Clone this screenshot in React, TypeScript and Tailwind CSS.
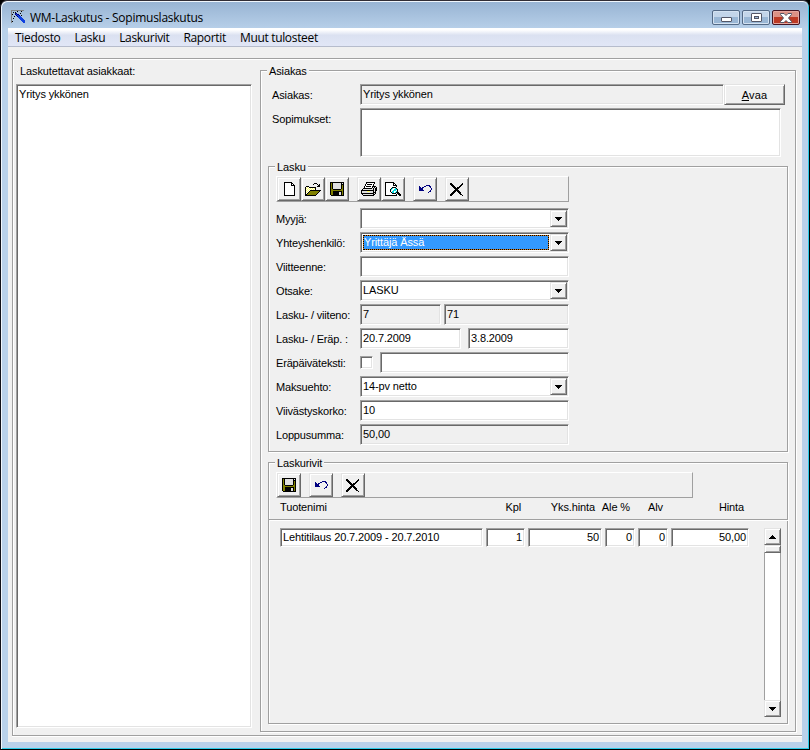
import { ReactNode } from 'react';

// Colors used by the pixel icons, one letter per color
const palette: Record<string, string> = {
  '#': '#000000',
  w: '#ffffff',
  y: '#ffff66',
  o: '#808000',
  g: '#e0e0e0',
  d: '#808080',
  b: '#000080',
  u: '#1040e0',
  c: '#00e0e0',
};

const newIcon = [
  '########...',
  '#wwwwww##..',
  '#wwwwww#w#.',
  '#wwwwww####',
  '#wwwwwwwww#',
  '#wwwwwwwww#',
  '#wwwwwwwww#',
  '#wwwwwwwww#',
  '#wwwwwwwww#',
  '#wwwwwwwww#',
  '#wwwwwwwww#',
  '#wwwwwwwww#',
  '#wwwwwwwww#',
  '###########',
];

const openIcon = [
  '.........###....',
  '........#...#.#.',
  '.............##.',
  '.###........###.',
  '#wyw#######.....',
  '#ywywywywy#.....',
  '#wywywywyw#.....',
  '#ywyw###########',
  '#wyw#ooooooooo#.',
  '#yw#ooooooooo#..',
  '#w#ooooooooo#...',
  '##ooooooooo#....',
  '###########.....',
];

const saveIcon = [
  '##############',
  '#o#gggggggg#g#',
  '#o#gggggggg###',
  '#o#gggggggg#o#',
  '#o#gggggggg#o#',
  '#o#gggggggg#o#',
  '#o#gggggggg#o#',
  '#oo########oo#',
  '#oooooooooooo#',
  '#oo#########o#',
  '#oo######gg#o#',
  '#oo######gg#o#',
  '#oo######gg#o#',
  '.#############',
];

const printIcon = [
  '.....#########..',
  '.....#wwwwwww#..',
  '....#w#####w#...',
  '....#wwwwwww#...',
  '...#w#####w####.',
  '...#wwwwwww#g#g#',
  '..#########g#g##',
  '.#gggggggggg#g##',
  '#############g##',
  '#gggggyyyggg#g#.',
  '#ggggggggggg###.',
  '#############g#.',
  '.#gggggggggg##..',
  '..###########...',
];

const previewIcon = [
  '#########.......',
  '#wwwwwww##......',
  '#wwwwwww#w#.....',
  '#wwwwwww####....',
  '#wwwwwwwwww#....',
  '#wwwwww####.....',
  '#wwwww#cwwc#....',
  '#wwww#cwwccc#...',
  '#wwww#wwcccw#...',
  '#wwww#wccwwc#...',
  '#wwwww#ccwc###..',
  '#wwwwww####.###.',
  '#wwwwwwwwww#.###',
  '############..##',
];

const undoIcon = [
  '.......bbbb..',
  'b....bb...bb.',
  'bb.bb......b.',
  'bbbb........b',
  'bbbb........b',
  'bbbbb......b.',
  '..........bb.',
  '.........b...',
];

const deleteIcon = [
  '##..........#.',
  '###........##.',
  '.###......##..',
  '..###....##...',
  '...###.###....',
  '....#####.....',
  '.....###......',
  '....#####.....',
  '...###.###....',
  '..###...###...',
  '.###.....##...',
  '###.......##..',
  '##..........#.',
];

const wandIcon = [
  'ddddddddddddd.',
  'd.....#...#...',
  'd.#.#.........',
  'd...bb...#....',
  'd#..bubb......',
  'd....buub.#...',
  'd..#..buuu....',
  'd......uuuu...',
  'd.#.....uuuu..',
  'd........uuuu.',
  'd.........uuuu',
  'd#.........uuu',
  'd...........uu',
];

const downArrow = ['#######', '.#####.', '..###..', '...#...'];
const upArrow = ['...#...', '..###..', '.#####.', '#######'];

// Border styles
const etched =
  'border border-[#a0a0a0] shadow-[1px_1px_0_#fff,inset_1px_1px_0_#fff]';
const sunken =
  'border border-t-[#a0a0a0] border-l-[#a0a0a0] border-r-white border-b-white shadow-[inset_1px_1px_0_#696969,inset_-1px_-1px_0_#e3e3e3]';
const raised =
  'border border-t-[#e3e3e3] border-l-[#e3e3e3] border-r-[#696969] border-b-[#696969] bg-[#f0f0f0] shadow-[inset_1px_1px_0_#fff,inset_-1px_-1px_0_#a0a0a0]';

function PixelIcon({ rows }: { rows: string[] }) {
  return (
    <svg
      width={rows[0].length}
      height={rows.length}
      shapeRendering="crispEdges"
      className="shrink-0"
    >
      {rows.map((row, y) =>
        row
          .split('')
          .map((ch, x) =>
            ch === '.' ? null : (
              <rect
                key={`${x}-${y}`}
                x={x}
                y={y}
                width={1}
                height={1}
                fill={palette[ch]}
              />
            )
          )
      )}
    </svg>
  );
}

function ToolButton({ icon, gap }: { icon: string[]; gap?: boolean }) {
  return (
    <button
      className={`flex h-6 w-6 shrink-0 items-center justify-center ${raised} ${gap ? 'ml-2' : ''}`}
    >
      <PixelIcon rows={icon} />
    </button>
  );
}

function Toolbar({ width, children }: { width: string; children: ReactNode }) {
  return (
    <div
      className={`flex h-[26px] border border-t-white border-l-white border-r-[#a0a0a0] border-b-[#a0a0a0] ${width}`}
    >
      {children}
    </div>
  );
}

function GroupTitle({ children }: { children: ReactNode }) {
  return (
    <span className="absolute -top-[6px] left-[6px] bg-[#f0f0f0] px-[2px] leading-[13px]">
      {children}
    </span>
  );
}

interface FieldProps {
  value?: string;
  width: string;
  readOnly?: boolean;
  select?: boolean;
  selected?: boolean;
}

function Field({ value, width, readOnly, select, selected }: FieldProps) {
  return (
    <div
      className={`flex h-[21px] shrink-0 p-px ${width} ${sunken} ${readOnly ? 'bg-[#f0f0f0]' : 'bg-white'}`}
    >
      {selected ? (
        <div className="m-px flex grow bg-[#d07818]">
          <div className="grow border border-dotted border-black bg-[#3399ff] bg-clip-padding leading-[13px] text-white">
            {value}
          </div>
        </div>
      ) : (
        <div className="grow pl-px leading-[16px]">{value}</div>
      )}
      {select && (
        <button
          className={`flex w-[17px] shrink-0 items-center justify-center ${raised}`}
        >
          <PixelIcon rows={downArrow} />
        </button>
      )}
    </div>
  );
}

function Row({ label, children }: { label: string; children: ReactNode }) {
  return (
    <div className="flex h-6">
      <div className="w-[84px] shrink-0 pt-[3px] leading-4 tracking-[-0.17px] whitespace-nowrap">
        {label}
      </div>
      {children}
    </div>
  );
}

function Cell({
  value,
  width,
  left,
}: {
  value: string;
  width: string;
  left?: boolean;
}) {
  return (
    <div
      className={`h-[19px] shrink-0 bg-white px-[2px] leading-[17px] whitespace-nowrap ${width} ${sunken} ${left ? 'text-left' : 'text-right'}`}
    >
      {value}
    </div>
  );
}

function TitleBar() {
  return (
    <div className="flex h-7 shrink-0 items-start bg-linear-to-b from-[#98b4d3] to-[#b9d1ea] pl-[9px]">
      <div className="mt-2">
        <PixelIcon rows={wandIcon} />
      </div>
      <span className="mt-2 ml-[5px] grow font-['Open_Sans','Noto_Sans',sans-serif] text-[12px] leading-4 tracking-[-0.25px]">
        WM-Laskutus - Sopimuslaskutus
      </span>
      <div className="mt-2 mr-2 flex gap-[2px]">
        <button className="flex h-[15px] w-7 items-end justify-center rounded-[2px] border border-[#536985] bg-linear-to-b from-[#c3d5e9] from-50% to-[#9ab7d5] to-50% pb-[2px] shadow-[inset_0_0_0_1px_#d4e2f1]">
          <span className="h-[5px] w-[11px] rounded-[1px] border border-[#535666] bg-white" />
        </button>
        <button className="flex h-[15px] w-7 items-center justify-center rounded-[2px] border border-[#536985] bg-linear-to-b from-[#c3d5e9] from-50% to-[#9ab7d5] to-50% shadow-[inset_0_0_0_1px_#d4e2f1]">
          <span className="flex h-[9px] w-[11px] items-center justify-center rounded-[1px] border border-[#535666] bg-white">
            <span className="h-[3px] w-[5px] border border-[#535666] bg-[#9ab7d5]" />
          </span>
        </button>
        <button className="flex h-[15px] w-7 items-center justify-center rounded-[2px] border border-[#431422] bg-linear-to-b from-[#dd9185] from-50% to-[#bd3a25] to-50% shadow-[inset_0_0_0_1px_#e5a79f]">
          <svg width="12" height="10" viewBox="0 0 12 10">
            <path
              d="M.5.5h3.500l2 2 2-2h3.500v1L8.500 5l3 3.500v1H8l-2-2-2 2H.5v-1l3-3.500-3-3.500z"
              fill="#fff"
              stroke="#535666"
            />
          </svg>
        </button>
      </div>
    </div>
  );
}

function MenuBar() {
  const items = ['Tiedosto', 'Lasku', 'Laskurivit', 'Raportit', 'Muut tulosteet'];

  return (
    <div className="flex h-[19px] shrink-0 gap-[14px] border-b border-[#b6bccc] bg-linear-to-b from-white from-10% via-[#dbe1f1] via-40% to-[#e1e6f6] pl-[7px] font-['Open_Sans','Noto_Sans',sans-serif] text-[12px] leading-[20px] tracking-[-0.33px]">
      {items.map((item) => (
        <span key={item}>{item}</span>
      ))}
    </div>
  );
}

function CustomerList() {
  return (
    <div className="w-[239px] shrink-0 pl-[3px]">
      <div className="h-[25px] pt-[4px] pl-1 leading-4">
        Laskutettavat asiakkaat:
      </div>
      <div className={`h-[644px] bg-white pt-px pl-[2px] leading-4 ${sunken}`}>
        Yritys ykkönen
      </div>
    </div>
  );
}

function InvoiceGroup() {
  return (
    <div className={`relative ml-[7px] h-[286px] w-[520px] pt-[9px] pl-[7px] ${etched}`}>
      <GroupTitle>Lasku</GroupTitle>
      <Toolbar width="w-[293px]">
        <ToolButton icon={newIcon} />
        <ToolButton icon={openIcon} />
        <ToolButton icon={saveIcon} />
        <ToolButton icon={printIcon} gap />
        <ToolButton icon={previewIcon} />
        <ToolButton icon={undoIcon} gap />
        <ToolButton icon={deleteIcon} gap />
      </Toolbar>
      <div className="mt-[6px]">
        <Row label="Myyjä:">
          <Field width="w-[209px]" select />
        </Row>
        <Row label="Yhteyshenkilö:">
          <Field width="w-[209px]" value="Yrittäjä Ässä" select selected />
        </Row>
        <Row label="Viitteenne:">
          <Field width="w-[209px]" />
        </Row>
        <Row label="Otsake:">
          <Field width="w-[209px]" value="LASKU" select />
        </Row>
        <Row label="Lasku- / viiteno:">
          <Field width="w-[81px]" value="7" readOnly />
          <div className="w-[3px]" />
          <Field width="w-[125px]" value="71" readOnly />
        </Row>
        <Row label="Lasku- / Eräp. :">
          <Field width="w-[101px]" value="20.7.2009" />
          <div className="w-[7px]" />
          <Field width="w-[101px]" value="3.8.2009" />
        </Row>
        <Row label="Eräpäiväteksti:">
          <div className={`mt-1 mr-[7px] h-[13px] w-[13px] bg-white ${sunken}`} />
          <Field width="w-[189px]" />
        </Row>
        <Row label="Maksuehto:">
          <Field width="w-[209px]" value="14-pv netto" select />
        </Row>
        <Row label="Viivästyskorko:">
          <Field width="w-[209px]" value="10" />
        </Row>
        <Row label="Loppusumma:">
          <Field width="w-[209px]" value="50,00" readOnly />
        </Row>
      </div>
    </div>
  );
}

function InvoiceRows() {
  return (
    <div className="mt-[10px] ml-[7px] w-[520px]">
      <div className={`relative h-[58px] pt-[9px] pl-[7px] ${etched}`}>
        <GroupTitle>Laskurivit</GroupTitle>
        <Toolbar width="w-[417px]">
          <ToolButton icon={saveIcon} />
          <ToolButton icon={undoIcon} gap />
          <ToolButton icon={deleteIcon} gap />
        </Toolbar>
        <div className="flex pt-px pl-1 leading-4 whitespace-nowrap">
          <span className="w-[202px]">Tuotenimi</span>
          <span className="w-[39px] text-right">Kpl</span>
          <span className="w-[74px] text-right">Yks.hinta</span>
          <span className="w-[35px] text-right">Ale %</span>
          <span className="w-[33px] text-right">Alv</span>
          <span className="w-[81px] text-right">Hinta</span>
        </div>
      </div>
      <div className="flex h-[204px] border border-t-0 border-[#a0a0a0] pt-2 pl-[11px] shadow-[1px_1px_0_#fff,inset_1px_1px_0_#fff]">
        <div className="flex grow gap-[3px]">
          <Cell width="w-[203px]" value="Lehtitilaus 20.7.2009 - 20.7.2010" left />
          <Cell width="w-[39px]" value="1" />
          <Cell width="w-[74px]" value="50" />
          <Cell width="w-[30px]" value="0" />
          <Cell width="w-[30px]" value="0" />
          <Cell width="w-[78px]" value="50,00" />
        </div>
        <div className="mr-[6px] flex h-[189px] w-[17px] shrink-0 flex-col border-x border-[#a0a0a0] bg-white">
          <button
            className={`-mx-px flex h-[17px] shrink-0 items-center justify-center ${raised}`}
          >
            <PixelIcon rows={upArrow} />
          </button>
          <div className={`-mx-px h-2 shrink-0 ${raised}`} />
          <div className="grow" />
          <button
            className={`-mx-px flex h-[17px] shrink-0 items-center justify-center ${raised}`}
          >
            <PixelIcon rows={downArrow} />
          </button>
        </div>
      </div>
    </div>
  );
}

function CustomerGroup() {
  return (
    <div className={`relative mt-[11px] ml-2 h-[662px] w-[536px] shrink-0 ${etched}`}>
      <GroupTitle>Asiakas</GroupTitle>
      <div className="mt-[13px] flex h-6 pl-[11px]">
        <div className="w-[88px] shrink-0 pt-[3px] leading-4">Asiakas:</div>
        <Field width="w-[364px]" value="Yritys ykkönen" readOnly />
        <button
          className={`h-[21px] w-[61px] leading-[18px] tracking-[0.2px] ${raised}`}
        >
          <span className="underline">A</span>vaa
        </button>
      </div>
      <div className="flex h-[58px] pl-[11px]">
        <div className="w-[88px] shrink-0 pt-[3px] leading-4">Sopimukset:</div>
        <div className={`h-[49px] w-[421px] bg-white ${sunken}`} />
      </div>
      <InvoiceGroup />
      <InvoiceRows />
    </div>
  );
}

export default function App() {
  return (
    <div className="h-[750px] w-[810px] overflow-hidden bg-black">
      <div className="flex h-[750px] w-[810px] flex-col rounded-t-[7px] border border-t-[#302c34] border-r-black border-b-black border-l-[#101018] bg-[#b9d1ea] text-black shadow-[inset_1px_1px_0_#f0f6fc,inset_-1px_-1px_0_#2ccbe8]">
        <div className="mx-px mt-px -mb-[2px] overflow-hidden rounded-t-[6px]">
          <TitleBar />
        </div>
        <div className="mx-[7px] flex h-[714px] shrink-0 flex-col overflow-hidden bg-[#f0f0f0] font-['Liberation_Sans',Arial,sans-serif] text-[11px] tracking-[-0.12px]">
          <MenuBar />
          <div className="mt-[11px] ml-1 flex h-[678px] shrink-0 border border-r-0 border-[#a0a0a0] shadow-[0_1px_0_#fff,inset_1px_1px_0_#fff]">
            <CustomerList />
            <CustomerGroup />
          </div>
        </div>
      </div>
    </div>
  );
}
